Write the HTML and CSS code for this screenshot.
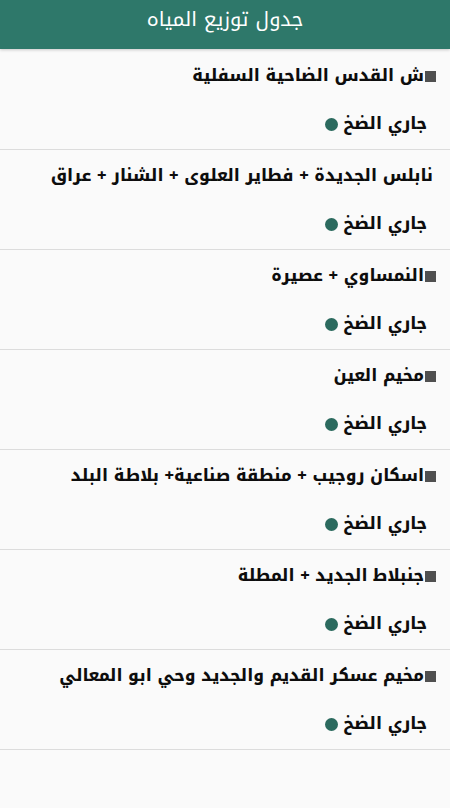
FILE: index.html
```html
<!DOCTYPE html>
<html lang="ar" dir="rtl">
<head>
<meta charset="utf-8">
<link rel="stylesheet" href="styles.css">
</head>
<body>
<header class="bar"><h1 class="bar-title">جدول توزيع المياه</h1></header>
<main class="list">
  <div class="row"><div class="name"><span class="sq"></span>ش القدس الضاحية السفلية</div><div class="status">جاري الضخ<span class="dot"></span></div></div>
  <div class="row"><div class="name name-plain">نابلس الجديدة + فطاير العلوى + الشنار + عراق</div><div class="status">جاري الضخ<span class="dot"></span></div></div>
  <div class="row"><div class="name"><span class="sq"></span>النمساوي + عصيرة</div><div class="status">جاري الضخ<span class="dot"></span></div></div>
  <div class="row"><div class="name"><span class="sq"></span>مخيم العين</div><div class="status">جاري الضخ<span class="dot"></span></div></div>
  <div class="row"><div class="name"><span class="sq"></span>اسكان روجيب + منطقة صناعية+ بلاطة البلد</div><div class="status">جاري الضخ<span class="dot"></span></div></div>
  <div class="row"><div class="name"><span class="sq"></span>جنبلاط الجديد + المطلة</div><div class="status">جاري الضخ<span class="dot"></span></div></div>
  <div class="row"><div class="name"><span class="sq"></span>مخيم عسكر القديم والجديد وحي ابو المعالي</div><div class="status">جاري الضخ<span class="dot"></span></div></div>
</main>
</body>
</html>
```
FILE: styles.css
```css
html, body { margin: 0; padding: 0; }
body {
  background: #fafafa;
  font-family: "Noto Kufi Arabic", "DejaVu Sans", sans-serif;
  color: #0d0d0d;
  width: 450px;
  height: 808px;
  overflow: hidden;
}
.bar {
  height: 49px;
  background: #2e786a;
  display: flex;
  align-items: flex-start;
  justify-content: center;
  box-shadow: 0 1px 3px rgba(0,0,0,0.2);
  position: relative;
}
.bar-title {
  margin: 0;
  padding-top: 6px;
  font-size: 20px;
  font-weight: normal;
  color: #fff;
  line-height: 26px;
}
.list { padding-top: 1px; }
.row {
  height: 99px;
  border-bottom: 1px solid #dcdcdc;
  display: flex;
  flex-direction: column;
  padding-right: 14px;
  box-sizing: content-box;
}
.name {
  font-weight: 800;
  font-size: 16.5px;
  line-height: 26px;
  margin-top: 13px;
  display: flex;
  align-items: center;
}
.name-plain { margin-right: 3px; }
.sq {
  width: 11px;
  height: 11px;
  background: #505050;
  display: inline-block;
  margin-left: 1px;
  flex: none;
}
.status {
  font-weight: 800;
  font-size: 16.5px;
  line-height: 26px;
  margin-top: 22px;
  margin-right: 9px;
  display: flex;
  align-items: center;
}
.dot {
  width: 13px;
  height: 13px;
  border-radius: 50%;
  background: #2b6a5e;
  margin-right: 5px;
  display: inline-block;
}
```
